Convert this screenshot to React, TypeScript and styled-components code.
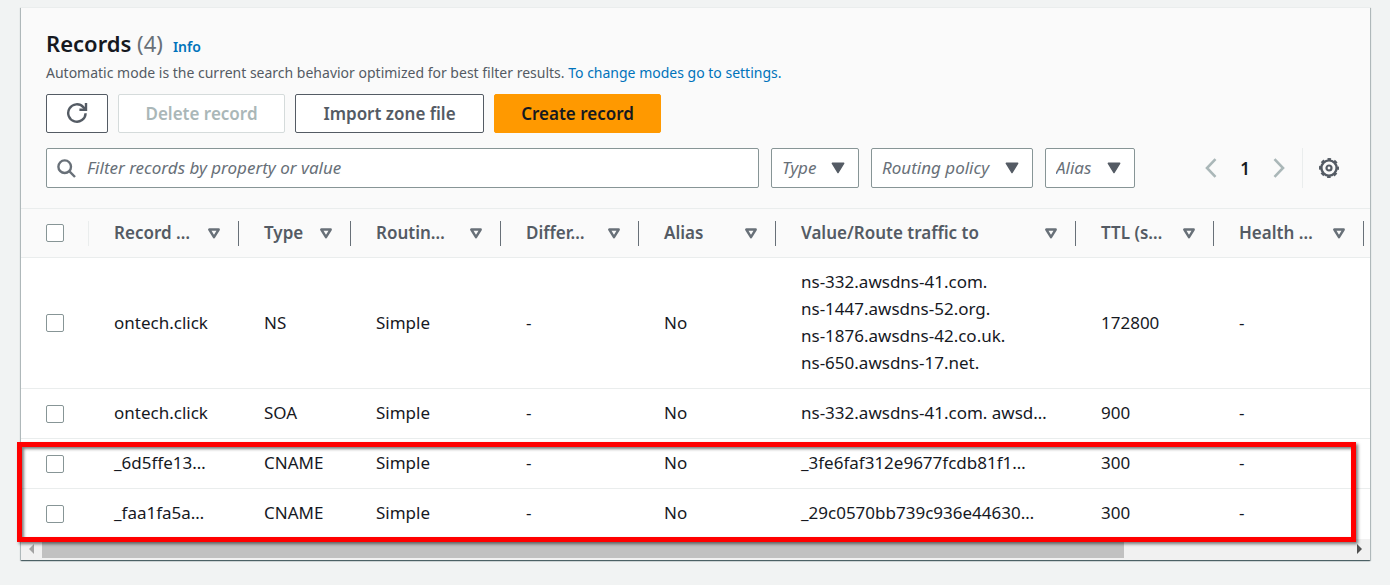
import React from 'react';
import styled, { createGlobalStyle, css } from 'styled-components';

const GlobalStyle = createGlobalStyle`
  *, *::before, *::after { box-sizing: border-box; }
  body {
    margin: 0;
    background: #f1f3f3;
    color: #16191f;
    font-family: "Noto Sans", "Open Sans", sans-serif;
    font-size: 17px;
    line-height: 27px;
  }
  button, input, select { font: inherit; color: inherit; margin: 0; }
`;

const Page = styled.main`
  padding: 7px 20px 24px 21px;
`;

const Panel = styled.section`
  position: relative;
  background: #fff;
  border-top: 1px solid #eaeded;
  box-shadow: 0 1px 1px 0 rgba(0, 28, 36, 0.5), 1px 1px 1px 0 rgba(0, 28, 36, 0.2),
    -1px 1px 1px 0 rgba(0, 28, 36, 0.2);
`;

const PanelHeader = styled.header`
  padding: 21px 25px 20px;
  background: #fafafa;
`;

const TitleRow = styled.div`
  display: flex;
  align-items: baseline;
  gap: 10px;
  height: 28px;
`;

const Title = styled.h2`
  margin: 0;
  font-size: 22px;
  line-height: 28px;
  font-weight: 600;
`;

const Counter = styled.span`
  color: #687078;
  font-weight: 400;
`;

const TextLink = styled.a<{ $strong?: boolean }>`
  color: #0073bb;
  font-size: 14px;
  line-height: 20px;
  font-weight: ${(p) => (p.$strong ? 600 : 400)};
  text-decoration: none;
`;

const Description = styled.p`
  margin: 5px 0 10px;
  color: #545b64;
  font-size: 14px;
  line-height: 22px;
`;

const Actions = styled.div`
  display: flex;
  gap: 10px;
  margin-bottom: 15px;
`;

const ActionButton = styled.button<{ $primary?: boolean; $width: number }>`
  display: flex;
  align-items: center;
  justify-content: center;
  min-width: ${(p) => p.$width}px;
  height: 39px;
  padding: 0 10px 1px;
  border: 1px solid ${(p) => (p.$primary ? '#ff9900' : '#545b64')};
  border-radius: 2px;
  background: ${(p) => (p.$primary ? '#ff9900' : '#fff')};
  color: ${(p) => (p.$primary ? '#16191f' : '#545b64')};
  font-weight: 600;
  white-space: nowrap;
  &:disabled {
    border-color: #d5dbdb;
    color: #aab7b8;
  }
`;

const Filters = styled.div`
  display: flex;
  align-items: center;
  gap: 12px;
`;

const SearchBox = styled.label`
  flex: 1;
  display: flex;
  align-items: center;
  gap: 11px;
  height: 40px;
  padding: 0 10px;
  border: 1px solid #879596;
  border-radius: 2px;
  background: #fff;
`;

const SearchInput = styled.input`
  flex: 1;
  min-width: 0;
  padding: 0 0 1px;
  border: 0;
  outline: 0;
  background: none;
  &::placeholder {
    color: #687078;
    font-style: italic;
    opacity: 1;
  }
`;

const SelectBox = styled.div<{ $width: number }>`
  position: relative;
  width: ${(p) => p.$width}px;
  svg {
    position: absolute;
    right: 14px;
    top: 14px;
    pointer-events: none;
  }
`;

const Select = styled.select`
  appearance: none;
  display: block;
  width: 100%;
  height: 40px;
  padding: 0 10px 2px;
  border: 1px solid #879596;
  border-radius: 2px;
  background: #fff;
  color: #687078;
  font-style: italic;
`;

const Pager = styled.nav`
  display: flex;
  align-items: center;
  justify-content: space-between;
  width: 90px;
  margin-left: 53px;
  padding: 0 5px;
`;

const IconButton = styled.button`
  display: flex;
  padding: 0;
  border: 0;
  background: none;
`;

const PageNumber = styled(IconButton)`
  font-weight: 600;
`;

const Preferences = styled.div`
  display: flex;
  align-items: center;
  height: 40px;
  padding: 0 6px 0 16px;
  border-left: 1px solid #eaeded;
`;

const Table = styled.table`
  width: 100%;
  table-layout: fixed;
  border-collapse: separate;
  border-spacing: 0;
`;

const Column = styled.col<{ $width?: number }>`
  ${(p) => p.$width && css`width: ${p.$width}px;`}
`;

const HeadCell = styled.th`
  height: 50px;
  padding: 0;
  border-top: 1px solid #eaeded;
  border-bottom: 1px solid #eaeded;
  background: #fafafa;
  color: #545b64;
  font-weight: 600;
  line-height: 25px;
  text-align: left;
`;

const HeadContent = styled.div<{ $light?: boolean }>`
  display: flex;
  align-items: center;
  justify-content: space-between;
  height: 25px;
  padding: 0 18px 0 25px;
  border-right: 1px solid ${(p) => (p.$light ? '#eaeded' : '#687078')};
  white-space: nowrap;
`;

const HeadLabel = styled.span`
  padding-bottom: 2px;
`;

const Row = styled.tr<{ $last?: boolean }>`
  td {
    border-bottom: 1px solid ${(p) => (p.$last ? 'transparent' : '#eaeded')};
  }
`;

const Cell = styled.td`
  height: 50px;
  padding: 10px 0 12px 25px;
  white-space: nowrap;
`;

const CheckCell = styled(Cell)`
  padding: 11px 0 11px 25px;
`;

const Checkbox = styled.input`
  appearance: none;
  display: block;
  width: 18px;
  height: 18px;
  margin: 0;
  border: 1px solid #879596;
  border-radius: 2px;
  background: #fff;
`;

const ScrollBar = styled.div`
  display: flex;
  align-items: stretch;
  height: 21px;
  padding-bottom: 2px;
  background: #f1f1f1;
`;

const ScrollArrow = styled.button`
  display: flex;
  align-items: center;
  justify-content: center;
  width: 21px;
  padding: 0;
  border: 0;
  background: none;
`;

const ScrollTrack = styled.div`
  flex: 1;
  display: grid;
  grid-template-columns: 53fr 11fr;
`;

const ScrollThumb = styled.div`
  background: #c1c1c1;
`;

const Highlight = styled.div`
  position: absolute;
  left: -4px;
  right: 14px;
  bottom: 18px;
  height: 100px;
  border: 5px solid #f00;
  box-shadow: 2px 2px 3px rgba(0, 0, 0, 0.5), inset 2px 2px 3px rgba(0, 0, 0, 0.5);
  pointer-events: none;
`;

const RefreshIcon = () => (
  <svg width="22" height="22" viewBox="0 0 22 22" fill="none" stroke="#545b64" strokeWidth="2.4">
    <path d="M19.6 11.2a8.7 8.7 0 1 1-2.3-6.1l2 2.2" />
    <path d="M20 1v6.8h-6.6" />
  </svg>
);

const SearchIcon = () => (
  <svg width="19" height="19" viewBox="0 0 19 19" fill="none" stroke="#687078" strokeWidth="2.4">
    <circle cx="7.7" cy="7.7" r="6.3" />
    <path d="M12.2 12.2l5.8 5.8" />
  </svg>
);

const CaretIcon = () => (
  <svg width="14" height="12" viewBox="0 0 14 12">
    <path d="M1.3 1.3h11.4L7 10.6z" fill="#545b64" stroke="#545b64" strokeWidth="1.4" strokeLinejoin="round" />
  </svg>
);

const SortIcon = () => (
  <svg width="12" height="11" viewBox="0 0 12 11">
    <path d="M1.3 1.5h9.4L6 9.2z" fill="none" stroke="#687078" strokeWidth="2.4" strokeLinejoin="round" />
  </svg>
);

const ChevronIcon = ({ forward }: { forward?: boolean }) => (
  <svg width="12" height="20" viewBox="0 0 12 20" fill="none" stroke="#aab7b8" strokeWidth="2.6">
    <path d={forward ? 'M1.5 1.2L10 10l-8.5 8.8' : 'M10.5 1.2L2 10l8.5 8.8'} />
  </svg>
);

const GearIcon = () => (
  <svg width="20" height="20" viewBox="0 0 20 20" fill="none" stroke="#545b64">
    <circle cx="10" cy="10" r="7.6" strokeWidth="2.4" />
    <circle cx="10" cy="10" r="9" strokeWidth="2" strokeDasharray="3.6 3.469" strokeDashoffset="1.8" />
    <circle cx="10" cy="10" r="2.5" strokeWidth="2.2" />
  </svg>
);

const ArrowIcon = ({ forward }: { forward?: boolean }) => (
  <svg width="5" height="10" viewBox="0 0 5 10">
    <path d={forward ? 'M0 0l5 5-5 5z' : 'M5 0L0 5l5 5z'} fill={forward ? '#505050' : '#a3a3a3'} />
  </svg>
);

const columns = [
  { label: 'Record …', width: 150 },
  { label: 'Type', width: 112 },
  { label: 'Routin…', width: 150 },
  { label: 'Differ…', width: 138 },
  { label: 'Alias', width: 137 },
  { label: 'Value/Route traffic to', width: 300 },
  { label: 'TTL (s…', width: 138 },
  { label: 'Health …', width: 150 },
];

const records = [
  {
    name: 'ontech.click',
    type: 'NS',
    values: [
      'ns-332.awsdns-41.com.',
      'ns-1447.awsdns-52.org.',
      'ns-1876.awsdns-42.co.uk.',
      'ns-650.awsdns-17.net.',
    ],
    ttl: '172800',
  },
  { name: 'ontech.click', type: 'SOA', values: ['ns-332.awsdns-41.com. awsd…'], ttl: '900' },
  { name: '_6d5ffe13…', type: 'CNAME', values: ['_3fe6faf312e9677fcdb81f1…'], ttl: '300' },
  { name: '_faa1fa5a…', type: 'CNAME', values: ['_29c0570bb739c936e44630…'], ttl: '300' },
];

const filters = [
  { label: 'Type', width: 88 },
  { label: 'Routing policy', width: 162 },
  { label: 'Alias', width: 90 },
];

export default function App() {
  return (
    <Page>
      <GlobalStyle />
      <Panel>
        <PanelHeader>
          <TitleRow>
            <Title>
              Records <Counter>(4)</Counter>
            </Title>
            <TextLink href="#info" $strong>
              Info
            </TextLink>
          </TitleRow>
          <Description>
            Automatic mode is the current search behavior optimized for best filter results.{' '}
            <TextLink href="#settings">To change modes go to settings.</TextLink>
          </Description>
          <Actions>
            <ActionButton type="button" $width={62} aria-label="Refresh">
              <RefreshIcon />
            </ActionButton>
            <ActionButton type="button" $width={167} disabled>
              Delete record
            </ActionButton>
            <ActionButton type="button" $width={189}>
              Import zone file
            </ActionButton>
            <ActionButton type="button" $width={167} $primary>
              Create record
            </ActionButton>
          </Actions>
          <Filters>
            <SearchBox>
              <SearchIcon />
              <SearchInput
                type="text"
                aria-label="Filter records"
                placeholder="Filter records by property or value"
              />
            </SearchBox>
            {filters.map((f) => (
              <SelectBox key={f.label} $width={f.width}>
                <Select aria-label={f.label}>
                  <option>{f.label}</option>
                </Select>
                <CaretIcon />
              </SelectBox>
            ))}
            <Pager aria-label="Pagination">
              <IconButton type="button" aria-label="Previous page">
                <ChevronIcon />
              </IconButton>
              <PageNumber type="button">1</PageNumber>
              <IconButton type="button" aria-label="Next page">
                <ChevronIcon forward />
              </IconButton>
            </Pager>
            <Preferences>
              <IconButton type="button" aria-label="Preferences">
                <GearIcon />
              </IconButton>
            </Preferences>
          </Filters>
        </PanelHeader>
        <Table>
          <colgroup>
            <Column $width={68} />
            {columns.map((c) => (
              <Column key={c.label} $width={c.width} />
            ))}
            <Column />
          </colgroup>
          <thead>
            <tr>
              <HeadCell>
                <HeadContent $light>
                  <Checkbox type="checkbox" aria-label="Select all records" />
                </HeadContent>
              </HeadCell>
              {columns.map((c) => (
                <HeadCell key={c.label} scope="col">
                  <HeadContent>
                    <HeadLabel>{c.label}</HeadLabel>
                    <SortIcon />
                  </HeadContent>
                </HeadCell>
              ))}
              <HeadCell />
            </tr>
          </thead>
          <tbody>
            {records.map((r, i) => (
              <Row key={i} $last={i === records.length - 1}>
                <CheckCell>
                  <Checkbox type="checkbox" aria-label={`Select ${r.name} ${r.type}`} />
                </CheckCell>
                <Cell>{r.name}</Cell>
                <Cell>{r.type}</Cell>
                <Cell>Simple</Cell>
                <Cell>-</Cell>
                <Cell>No</Cell>
                <Cell>
                  {r.values.map((v) => (
                    <div key={v}>{v}</div>
                  ))}
                </Cell>
                <Cell>{r.ttl}</Cell>
                <Cell>-</Cell>
                <Cell />
              </Row>
            ))}
          </tbody>
        </Table>
        <ScrollBar>
          <ScrollArrow type="button" aria-label="Scroll left">
            <ArrowIcon />
          </ScrollArrow>
          <ScrollTrack>
            <ScrollThumb />
          </ScrollTrack>
          <ScrollArrow type="button" aria-label="Scroll right">
            <ArrowIcon forward />
          </ScrollArrow>
        </ScrollBar>
        <Highlight />
      </Panel>
    </Page>
  );
}
